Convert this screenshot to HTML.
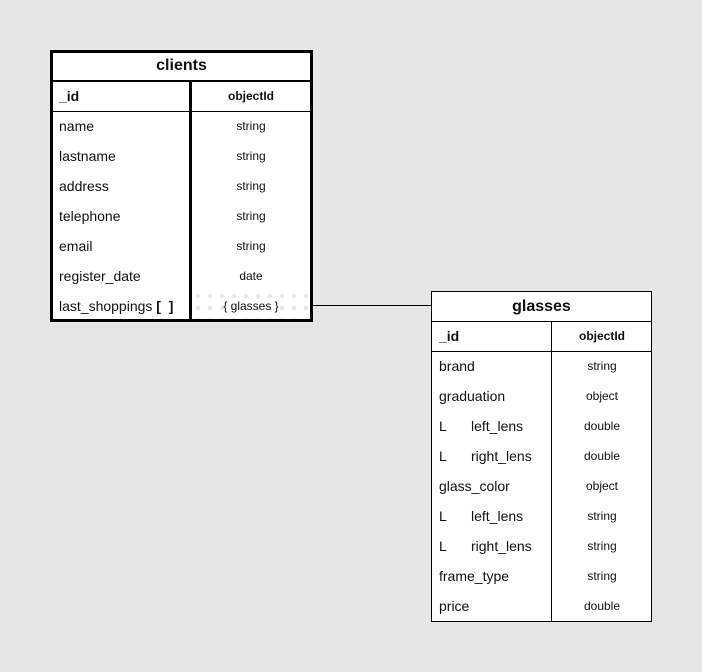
<!DOCTYPE html>
<html><head><meta charset="utf-8"><style>
body{margin:0;width:702px;height:672px;background:#e6e6e6;position:relative;overflow:hidden;font-family:"Liberation Sans",Arial,sans-serif;color:#111}
.b{position:absolute;background:#fff;box-sizing:border-box}
.t{position:absolute;font-size:14px;line-height:30px;white-space:nowrap}
.v{position:absolute;font-size:12px;line-height:30px;text-align:center}
.h{position:absolute;font-size:16px;font-weight:bold;line-height:30px;text-align:center}
.l{position:absolute;background:#000}
</style></head><body>
<div class="l" style="left:313px;top:305px;width:118px;height:1px"></div>

<div class="b" style="left:50px;top:50px;width:263px;height:272px;border:3px solid #000"></div>
<div class="l" style="left:50px;top:80px;width:263px;height:2px"></div>
<div class="l" style="left:189px;top:82px;width:3px;height:240px"></div>
<div class="l" style="left:53px;top:111px;width:257px;height:1px"></div>
<div style="position:absolute;left:192px;top:292px;width:118px;height:27px;background-image:radial-gradient(circle,#e8e8e8 2px,transparent 2.5px);background-size:12px 12px;background-position:0 -2px"></div>
<div class="h" style="left:50px;top:51px;width:263px">clients</div>
<div class="t" style="left:59px;top:81px;font-weight:bold">_id</div>
<div class="v" style="left:192px;top:81px;width:118px;font-weight:bold">objectId</div>
<div class="t" style="left:59px;top:111px">name</div><div class="v" style="left:192px;top:111px;width:118px">string</div>
<div class="t" style="left:59px;top:141px">lastname</div><div class="v" style="left:192px;top:141px;width:118px">string</div>
<div class="t" style="left:59px;top:171px">address</div><div class="v" style="left:192px;top:171px;width:118px">string</div>
<div class="t" style="left:59px;top:201px">telephone</div><div class="v" style="left:192px;top:201px;width:118px">string</div>
<div class="t" style="left:59px;top:231px">email</div><div class="v" style="left:192px;top:231px;width:118px">string</div>
<div class="t" style="left:59px;top:261px">register_date</div><div class="v" style="left:192px;top:261px;width:118px">date</div>
<div class="t" style="left:59px;top:291px">last_shoppings <b>[&nbsp; ]</b></div><div class="v" style="left:192px;top:291px;width:118px">{ glasses }</div>

<div class="b" style="left:431px;top:291px;width:221px;height:331px;border:1px solid #000"></div>
<div class="l" style="left:431px;top:321px;width:221px;height:1px"></div>
<div class="l" style="left:431px;top:351px;width:221px;height:1px"></div>
<div class="l" style="left:551px;top:321px;width:1px;height:301px"></div>
<div class="h" style="left:431px;top:292px;width:221px">glasses</div>
<div class="t" style="left:439px;top:321px;font-weight:bold">_id</div>
<div class="v" style="left:552px;top:321px;width:100px;font-weight:bold">objectId</div>
<div class="t" style="left:439px;top:351px">brand</div><div class="v" style="left:552px;top:351px;width:100px">string</div>
<div class="t" style="left:439px;top:381px">graduation</div><div class="v" style="left:552px;top:381px;width:100px">object</div>
<div class="t" style="left:439px;top:411px">L</div><div class="t" style="left:471px;top:411px">left_lens</div><div class="v" style="left:552px;top:411px;width:100px">double</div>
<div class="t" style="left:439px;top:441px">L</div><div class="t" style="left:471px;top:441px">right_lens</div><div class="v" style="left:552px;top:441px;width:100px">double</div>
<div class="t" style="left:439px;top:471px">glass_color</div><div class="v" style="left:552px;top:471px;width:100px">object</div>
<div class="t" style="left:439px;top:501px">L</div><div class="t" style="left:471px;top:501px">left_lens</div><div class="v" style="left:552px;top:501px;width:100px">string</div>
<div class="t" style="left:439px;top:531px">L</div><div class="t" style="left:471px;top:531px">right_lens</div><div class="v" style="left:552px;top:531px;width:100px">string</div>
<div class="t" style="left:439px;top:561px">frame_type</div><div class="v" style="left:552px;top:561px;width:100px">string</div>
<div class="t" style="left:439px;top:591px">price</div><div class="v" style="left:552px;top:591px;width:100px">double</div>
</body></html>
